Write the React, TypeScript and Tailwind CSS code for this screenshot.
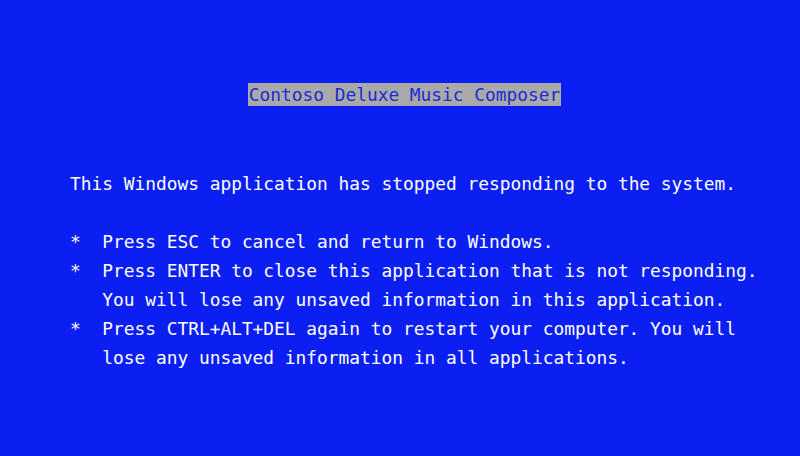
export default function App() {
  const bullets = [
    ['Press ESC to cancel and return to Windows.'],
    [
      'Press ENTER to close this application that is not responding.',
      'You will lose any unsaved information in this application.',
    ],
    [
      'Press CTRL+ALT+DEL again to restart your computer. You will',
      'lose any unsaved information in all applications.',
    ],
  ]

  return (
    <div className="w-[800px] h-[456px] bg-[#0b1ff2] text-white font-['DejaVu_Sans_Mono',monospace] text-[17.85px] leading-[29px] overflow-hidden">
      {/* Title */}
      <div className="flex justify-center pt-[83px] pl-[9px]">
        <span className="bg-[#a9a9a9] text-[#1b2bd6] px-[1px] leading-[23px]">
          Contoso Deluxe Music Composer
        </span>
      </div>

      {/* Message */}
      <div className="pl-[70px] pt-[63px]">
        <p>This Windows application has stopped responding to the system.</p>

        <ul className="mt-[29px]">
          {bullets.map((lines, i) => (
            <li key={i} className="flex">
              <span className="w-[3ch] shrink-0">*</span>
              <div>
                {lines.map((line) => (
                  <div key={line} className="whitespace-pre">
                    {line}
                  </div>
                ))}
              </div>
            </li>
          ))}
        </ul>
      </div>
    </div>
  )
}
